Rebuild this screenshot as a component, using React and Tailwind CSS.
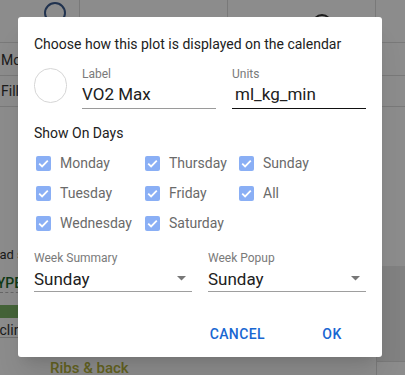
import React from "react";

const days = [
  ["Monday", "Thursday", "Sunday"],
  ["Tuesday", "Friday", "All"],
  ["Wednesday", "Saturday", null],
];

const CheckBox = ({ label }) => (
  <div className="flex items-center h-[30px]">
    <div className="w-[18px] h-[18px] flex items-center justify-center">
      <div className="w-[15px] h-[15px] rounded-[2px] bg-[#8aaff5] flex items-center justify-center">
        <svg width="15" height="15" viewBox="0 0 15 15">
          <path d="M3.2 7.6 L6.1 10.4 L11.8 4.6" fill="none" stroke="white" strokeWidth="1.8" />
        </svg>
      </div>
    </div>
    <span className="ml-[8px] text-[14px] text-[#6a6a6a]">{label}</span>
  </div>
);

const Select = ({ label, value }) => (
  <div className="flex-1">
    <div className="text-[12px] leading-[16px] text-[#7a7a7a]">{label}</div>
    <div className="flex items-center justify-between h-[26px] border-b border-[#9e9e9e]">
      <span className="text-[17px] leading-[24px] text-[#212121]">{value}</span>
      <svg width="9" height="5" viewBox="0 0 9 5" className="mr-[6px]">
        <polygon points="0,0 9,0 4.5,4.5" fill="#777" />
      </svg>
    </div>
  </div>
);

const Field = ({ label, value, focused }) => (
  <div className="w-[134px]">
    <div className="text-[12px] leading-[16px] text-[#7a7a7a]">{label}</div>
    <div
      className={
        focused
          ? "h-[27px] border-b-[1.5px] border-[#111] text-[17px] leading-[24px] text-[#212121] pl-[3px]"
          : "h-[27px] border-b border-[#9a9a9a] text-[17px] leading-[24px] text-[#212121]"
      }
    >
      {value}
    </div>
  </div>
);

// page behind the dialog, dimmed by the overlay
const Backdrop = () => (
  <div className="w-full h-full bg-white text-[14px] text-[#333] flex flex-col overflow-hidden">
    <div className="flex h-[43px] shrink-0 border-b border-[#ddd]">
      <div className="w-[80px] border-r border-[#ddd] relative">
        <div className="absolute left-[44px] top-[2px] w-[22px] h-[22px] rounded-full border-2 border-[#3b5b8f]" />
      </div>
      <div className="w-[148px] border-r border-[#ddd]" />
      <div className="w-[148px] border-r border-[#ddd] relative">
        <div className="absolute left-[84px] top-[14px] w-[20px] h-[20px] rounded-full border-2 border-[#333]" />
      </div>
      <div className="flex-1" />
    </div>
    <div className="h-[33px] shrink-0 border-b border-[#ddd] flex items-center pl-[1px] pt-[2px]">Movement</div>
    <div className="h-[31px] shrink-0 border-b border-[#ddd] flex items-center pl-[1px]">Fill in</div>
    <div className="flex flex-1">
      <div className="flex-1 flex flex-col">
        <div className="h-[143px]" />
        <div className="h-[14px] overflow-hidden text-[13px] leading-[14px]">
          <div className="-ml-[16px] -mt-[2px]">Road s</div>
        </div>
        <div className="h-[28px] pt-[12px] overflow-hidden text-[14px] leading-[14px] text-[#1b6b2a] font-medium">
          <div className="-ml-[12px]">TYPE</div>
        </div>
        <div className="border-b border-dashed border-[#bbb] w-[40px]" />
        <div className="h-[13px] mt-[12px] w-[40px] bg-[#7cb567]" />
        <div className="h-[19px] pt-[5px] leading-[14px] overflow-hidden">
          <div className="-ml-[12px]">Incline</div>
        </div>
        <div className="border-b border-[#ccc] w-full" />
        <div className="pl-[50px] pt-[22px] text-[15px] leading-[16px] font-medium text-[#b5b33c]">Ribs &amp; back</div>
      </div>
      <div className="w-[29px] flex flex-col border-l border-[#ddd]">
        <div className="h-[159px]" />
        <div className="h-[96px] bg-[#ececec] border-b border-[#ddd]" />
      </div>
    </div>
  </div>
);

export default function App() {
  return (
    <div className="relative w-[405px] h-[375px] overflow-hidden font-['Roboto',sans-serif]">
      <Backdrop />
      <div className="absolute inset-0 bg-black/45" />

      <div className="absolute left-[18px] top-[17px] w-[364px] h-[340px] bg-white rounded-[3px] shadow-xl px-[16px] pt-[17px]">
        <div className="text-[14px] leading-[20px] text-[#212121]">
          Choose how this plot is displayed on the calendar
        </div>

        <div className="flex items-start mt-[12px]">
          <div className="w-[35px] h-[35px] mt-[2px] rounded-full border border-[#d6d6d6]" />
          <div className="ml-[15px]">
            <Field label="Label" value="VO2 Max" />
          </div>
          <div className="ml-[16px]">
            <Field label="Units" value="ml_kg_min" focused />
          </div>
        </div>

        <div className="mt-[14px] text-[14px] leading-[20px] text-[#212121]">Show On Days</div>

        <div className="mt-[5px]">
          {days.map((row, i) => (
            <div key={i} className="flex">
              <div className="w-[109px]">{row[0] && <CheckBox label={row[0]} />}</div>
              <div className="w-[94px]">{row[1] && <CheckBox label={row[1]} />}</div>
              <div className="flex-1">{row[2] && <CheckBox label={row[2]} />}</div>
            </div>
          ))}
        </div>

        <div className="flex gap-[16px] mt-[12px]">
          <Select label="Week Summary" value="Sunday" />
          <Select label="Week Popup" value="Sunday" />
        </div>

        <div className="flex justify-end items-center mt-[24px] mr-[2px] gap-[19px]">
          <button className="h-[36px] px-[16px] text-[14px] font-medium tracking-[0.4px] text-[#1967d2]">
            CANCEL
          </button>
          <button className="h-[36px] w-[64px] text-[14px] font-medium tracking-[0.4px] text-[#1967d2]">
            OK
          </button>
        </div>
      </div>
    </div>
  );
}
